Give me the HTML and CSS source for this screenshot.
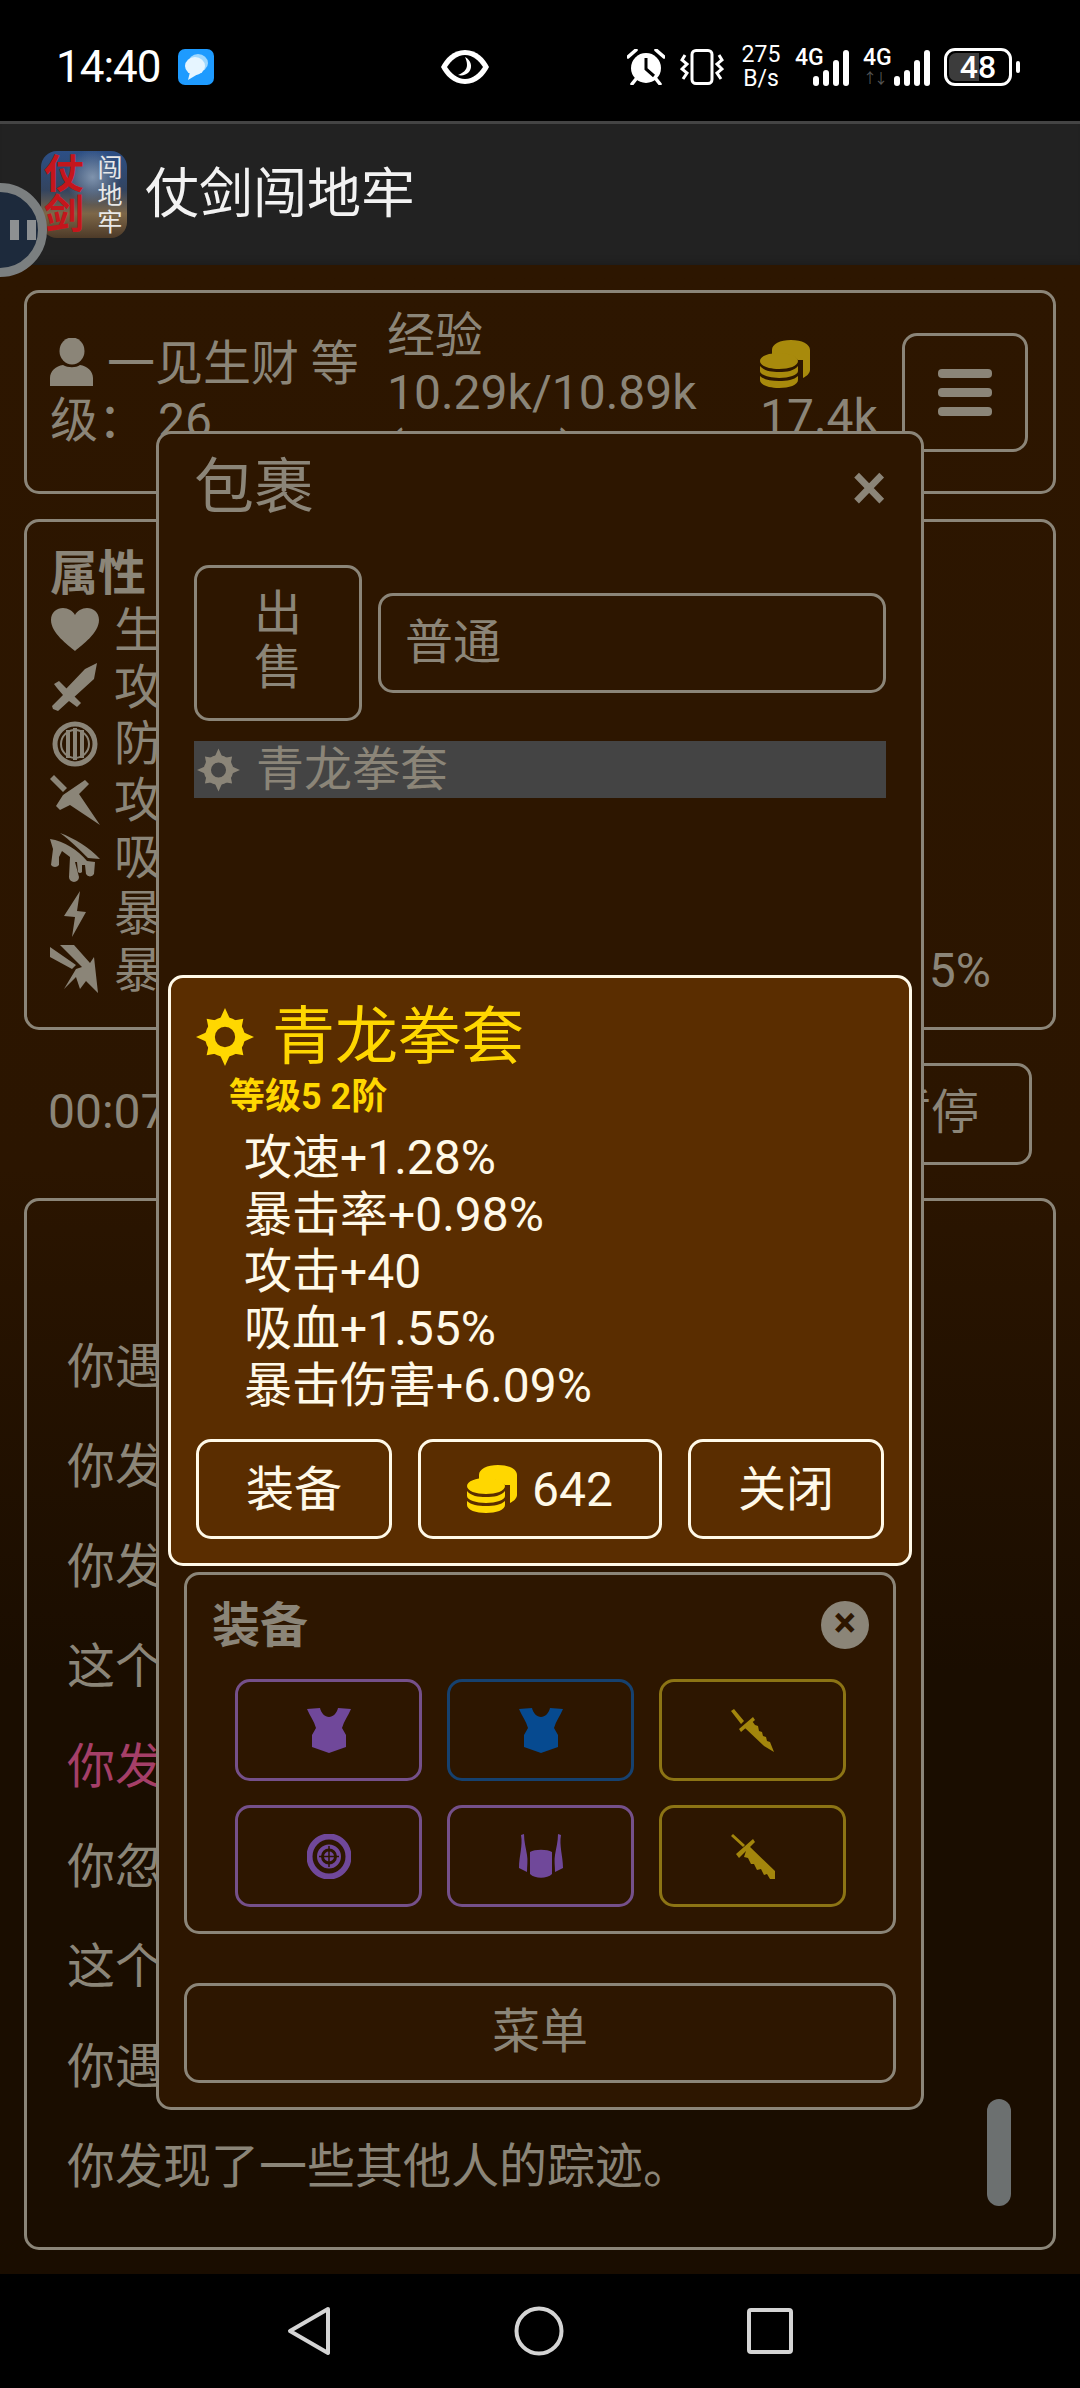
FILE: index.html
```html
<!DOCTYPE html>
<html lang="zh-CN">
<head>
    <meta charset="UTF-8">
    <meta name="viewport" content="width=device-width, initial-scale=1.0">
    <title>仗剑闯地牢</title>
    <link rel="stylesheet" href="styles.css">
</head>
<body>
    <svg class="defs" width="0" height="0">
        <symbol id="coins" viewBox="0 0 50 48">
            <path fill="currentColor" d="M12 10C12 4 20 0 31 0S50 4 50 10V30C50 33 47 36 43 38V20H38C33 14 22 13 12 15Z"/>
            <path fill="currentColor" d="M0 21C0 16 9 13 19 13S38 16 38 21 29 29 19 29 0 26 0 21ZM0 26C4 31 11 32 19 32S34 31 38 26V31C38 35 29 38 19 38S0 35 0 31ZM0 36C4 40 11 41 19 41S34 40 38 36V40C38 45 29 48 19 48S0 45 0 40Z"/>
        </symbol>
        <symbol id="ring" viewBox="0 0 60 60">
            <circle cx="30" cy="30" r="15.500" fill="none" stroke="currentColor" stroke-width="10"/>
            <path fill="currentColor" d="M30 0L35 11H25ZM60 30L49 35V25ZM30 60L25 49H35ZM0 30L11 25V35ZM49 11L47 21 39 13ZM49 49L39 47 47 39ZM11 49L13 39 21 47ZM11 11L21 13 13 21Z"/>
        </symbol>
        <symbol id="tunic" viewBox="0 0 44 45">
            <path fill="currentColor" d="M0 1L13 0C14 5 18 9 22 9S30 5 31 0L44 1C41 8 37 13 35 20L39 27V39L22 45 5 39V27L9 20C7 13 3 8 0 1Z"/>
        </symbol>
    </svg>

    <header class="status-bar">
        <span class="time">14:40</span>
        <svg class="chat-icon" viewBox="0 0 36 36">
            <rect width="36" height="36" rx="7" fill="#1e9bff"/>
            <ellipse cx="20" cy="14" rx="10" ry="9" fill="#9fd8ff"/>
            <ellipse cx="17" cy="17" rx="10" ry="9" fill="#e6f5ff"/>
            <path d="M12 23L10 31 20 25Z" fill="#e6f5ff"/>
        </svg>
        <svg class="eye-icon" viewBox="0 0 48 34">
            <path d="M24 0C36 0 44 9 48 17 44 25 36 34 24 34S4 25 0 17C4 9 12 0 24 0Z" fill="#fff"/>
            <path d="M24 5C32 5 38 11 42 17 38 23 32 29 24 29S10 23 6 17C10 11 16 5 24 5Z" fill="#000"/>
            <path d="M24 7C30 10 32 17 28 22 25 25 21 26 17 25 22 23 26 20 26 15 26 12 25 9 24 7Z" fill="#fff"/>
        </svg>
        <svg class="alarm-icon" viewBox="0 0 38 36">
            <circle cx="19" cy="19" r="15" fill="#fff"/>
            <path d="M19 9V20L27 27" fill="none" stroke="#000" stroke-width="3"/>
            <path d="M1 8L9 1M37 8L29 1M5 35L9 30M33 35L29 30" stroke="#fff" stroke-width="3.500" stroke-linecap="round"/>
        </svg>
        <svg class="vibrate-icon" viewBox="0 0 44 36">
            <rect x="12" y="1.500" width="20" height="33" rx="4" fill="none" stroke="#fff" stroke-width="3"/>
            <path d="M5 6L2 11 7 15 2 20 7 24 3 30M39 6L42 11 37 15 42 20 37 24 41 30" fill="none" stroke="#fff" stroke-width="3"/>
        </svg>
        <span class="net-speed">275<br>B/s</span>
        <span class="signal">
            <span class="signal-label">4G</span>
            <span class="bars"><i class="b1"></i><i class="b2"></i><i class="b3"></i><i class="b4"></i></span>
        </span>
        <span class="signal signal-second">
            <span class="signal-label">4G</span>
            <span class="arrows">↑↓</span>
            <span class="bars"><i class="b1"></i><i class="b2"></i><i class="b3"></i><i class="b4"></i></span>
        </span>
        <span class="battery"><span class="battery-fill"></span><span class="battery-num">48</span></span>
        <span class="battery-tip"></span>
    </header>

    <div class="app-bar">
        <div class="app-icon">
            <span class="app-icon-red">仗剑</span>
            <span class="app-icon-white">闯地牢</span>
        </div>
        <span class="app-title">仗剑闯地牢</span>
    </div>

    <div class="float-ball"><i></i><i></i></div>

    <main class="game">
        <section class="card top-card">
            <div class="player">
                <svg class="person-icon" viewBox="0 0 43 48">
                    <ellipse cx="22" cy="13" rx="12.500" ry="13.500" fill="currentColor"/>
                    <path d="M0 48V40C0 33 6 28 13 27 18 30 26 30 30 27 37 28 43 33 43 40V48Z" fill="currentColor"/>
                </svg>
                一见生财 等级：&nbsp;26
            </div>
            <div class="exp">经验<br>10.29k/10.89k<br>(94.49%)</div>
            <div class="gold">
                <svg class="coin-icon"><use href="#coins"/></svg>
                <span>17.4k</span>
            </div>
            <div class="menu-btn"><i></i><i></i><i></i></div>
        </section>

        <section class="card stats-card">
            <div class="stats-title">属性</div>
            <div class="stat-row">
                <svg class="stat-icon" viewBox="0 0 50 50"><path fill="currentColor" d="M25 46C18 40 1 28 1 15 1 7 7 3 13 3 18 3 23 6 25 10 27 6 32 3 37 3 43 3 49 7 49 15 49 28 32 40 25 46Z"/></svg>
                <span>生命</span>
            </div>
            <div class="stat-row">
                <svg class="stat-icon" viewBox="0 0 50 50"><path fill="currentColor" d="M47 1L44 17 22 37 14 29 35 7ZM4 22L9 19 31 41 27 45 19 39 8 49 3 47 2 44 13 33 7 26Z"/></svg>
                <span>攻击</span>
            </div>
            <div class="stat-row">
                <svg class="stat-icon" viewBox="0 0 50 50"><circle cx="25" cy="25" r="20" fill="none" stroke="currentColor" stroke-width="5"/><circle cx="25" cy="25" r="14" fill="none" stroke="currentColor" stroke-width="2"/><path d="M18 11V39M25 9V41M32 11V39" stroke="currentColor" stroke-width="4"/></svg>
                <span>防御</span>
            </div>
            <div class="stat-row">
                <svg class="stat-icon" viewBox="0 0 50 50"><path fill="currentColor" d="M0 4L4 0 17 13 13 17ZM35 5L39 9 29 19 50 50 20 30 10 35 6 31 13 20Z"/></svg>
                <span>攻速</span>
            </div>
            <div class="stat-row">
                <svg class="stat-icon" viewBox="0 0 50 50"><path fill="currentColor" d="M10 1C24 6 40 16 50 27L38 26C30 18 20 8 10 1ZM0 7C14 9 28 18 37 29L45 30 44 42A4.500 4.500 0 0 1 36 42L35 33H32V40A2.500 2.500 0 0 1 28 40L27 30H25L29 45A5 5 0 0 1 19 45L20 25 12 19 9 25V33A5 5 0 0 1 1 33L3 17Z"/></svg>
                <span>吸血</span>
            </div>
            <div class="stat-row">
                <svg class="stat-icon" viewBox="0 0 50 50"><path fill="currentColor" d="M30 2L27 22 36 23 22 48 25 28 14 27Z"/></svg>
                <span>暴击率</span>
            </div>
            <div class="stat-row">
                <svg class="stat-icon" viewBox="0 0 50 50"><path fill="currentColor" d="M0 12V2L26 20 22 24ZM10 0H24L40 18 44 12 48 48 36 36 30 44 26 32 14 44 26 24 32 22Z"/></svg>
                <span>暴击伤害</span>
                <span class="stat-value">5%</span>
            </div>
        </section>

        <div class="timer-row">
            <span class="timer">00:07</span>
            <div class="pause-btn">暂停</div>
        </div>

        <section class="card log-card">
            <p>你遇到了一只野猪。</p>
            <p>你发现了一个宝箱。</p>
            <p>你发现了一些金币。</p>
            <p>这个房间空无一物。</p>
            <p class="log-rare">你发现了稀有装备！</p>
            <p>你忽然感到一阵寒意。</p>
            <p>这个房间空无一物。</p>
            <p>你遇到了一只骷髅。</p>
            <p>你发现了一些其他人的踪迹。</p>
            <div class="scroll-thumb"></div>
        </section>
    </main>

    <nav class="nav-bar">
        <svg class="nav-back" viewBox="0 0 44 50"><path d="M41 3L3 25 41 47Z" fill="none" stroke="#d4d4d4" stroke-width="4" stroke-linejoin="round"/></svg>
        <svg class="nav-home" viewBox="0 0 50 50"><circle cx="25" cy="25" r="22.500" fill="none" stroke="#d4d4d4" stroke-width="4"/></svg>
        <svg class="nav-recent" viewBox="0 0 46 46"><rect x="2" y="2" width="42" height="42" rx="2" fill="none" stroke="#d4d4d4" stroke-width="4"/></svg>
    </nav>

    <!-- 包裹弹窗 -->
    <div class="bag-modal">
        <div class="bag-head">
            <span class="bag-title">包裹</span>
            <span class="bag-close">×</span>
        </div>
        <div class="bag-tools">
            <div class="sell-btn">出售</div>
            <div class="quality-select">普通</div>
        </div>
        <div class="bag-list">
            <div class="bag-item">
                <svg class="bag-item-icon"><use href="#ring"/></svg>
                青龙拳套
            </div>
        </div>

        <section class="equip-panel">
            <div class="equip-head">
                <span>装备</span>
                <span class="equip-close">×</span>
            </div>
            <div class="equip-grid">
                <div class="slot slot-purple"><svg class="slot-icon"><use href="#tunic"/></svg></div>
                <div class="slot slot-blue"><svg class="slot-icon"><use href="#tunic"/></svg></div>
                <div class="slot slot-gold">
                    <svg class="slot-icon" viewBox="0 0 44 45"><path fill="currentColor" d="M0 3L3 1 13 13 10 16ZM22 9L24 12 10 24 8 21ZM14 20L21 13 24 17 27 18 28 23 31 24 32 28 35 29 36 33 39 34 43 44 33 38Z"/></svg>
                </div>
                <div class="slot slot-purple">
                    <svg class="slot-icon" viewBox="0 0 44 45"><ellipse cx="22" cy="22.500" rx="19.500" ry="20" fill="none" stroke="currentColor" stroke-width="6"/><circle cx="22" cy="22.500" r="10" fill="none" stroke="currentColor" stroke-width="4"/><circle cx="22" cy="22.500" r="5" fill="currentColor"/><path d="M22 12V33M12 22.500H32" stroke="#2d1600" stroke-width="1.500"/></svg>
                </div>
                <div class="slot slot-purple">
                    <svg class="slot-icon" viewBox="0 0 44 45"><path fill="currentColor" d="M2 1L5 0C5 8 7 14 8 21 9 26 8 32 8 38L0 34C0 22 4 12 2 1ZM42 1L39 0C39 8 37 14 36 21 35 26 36 32 36 38L44 34C44 22 40 12 42 1ZM11 18C16 15 28 15 33 18V40C28 45 16 45 11 40Z"/></svg>
                </div>
                <div class="slot slot-gold">
                    <svg class="slot-icon" viewBox="0 0 44 45"><path fill="currentColor" d="M0 2L2 0 14 11 12 13ZM22 5L24 8 8 24 5 20ZM17 11L44 37V45L39 45 36 40 33 41 30 35 26 36 23 30 20 30 17 24 13 23Z"/></svg>
                </div>
            </div>
        </section>

        <div class="bag-menu-btn">菜单</div>

        <!-- 物品详情 -->
        <section class="item-popup">
            <div class="item-name">
                <svg class="item-name-icon"><use href="#ring"/></svg>
                青龙拳套
            </div>
            <div class="item-level">等级5 2阶</div>
            <ul class="item-attrs">
                <li>攻速+1.28%</li>
                <li>暴击率+0.98%</li>
                <li>攻击+40</li>
                <li>吸血+1.55%</li>
                <li>暴击伤害+6.09%</li>
            </ul>
            <div class="item-actions">
                <div class="item-btn item-btn-side">装备</div>
                <div class="item-btn item-btn-sell">
                    <svg class="item-coin"><use href="#coins"/></svg>
                    642
                </div>
                <div class="item-btn item-btn-side">关闭</div>
            </div>
        </section>
    </div>
</body>
</html>
```

FILE: styles.css
```css
* {
    box-sizing: border-box;
}

body {
    position: relative;
    display: flex;
    flex-direction: column;
    width: 1080px;
    height: 2388px;
    margin: 0;
    overflow: hidden;
    background: #000;
    color: #8b8578;
    font-family: Roboto, "Noto Sans CJK SC", sans-serif;
    font-size: 48px;
    line-height: 57px;
}

.defs {
    position: absolute;
}

/* 状态栏 */
.status-bar {
    display: flex;
    flex: none;
    align-items: center;
    height: 121px;
    padding: 13px 0 0 56px;
    color: #fff;
}

.time {
    width: 109px;
    font-size: 44px;
    letter-spacing: -1px;
    line-height: 50px;
}

.chat-icon {
    width: 36px;
    height: 36px;
    margin-left: 13px;
}

.eye-icon {
    width: 48px;
    height: 34px;
    margin-left: 227px;
}

.alarm-icon {
    width: 38px;
    height: 36px;
    margin-left: 138px;
}

.vibrate-icon {
    width: 44px;
    height: 36px;
    margin-left: 15px;
}

.net-speed {
    width: 42px;
    margin-left: 16px;
    font-size: 23px;
    line-height: 24px;
    text-align: center;
}

.signal {
    position: relative;
    display: block;
    width: 54px;
    height: 38px;
    margin-left: 13px;
}

.signal-second {
    width: 67px;
    margin-left: 14px;
}

.signal-label {
    position: absolute;
    top: -3px;
    left: 0;
    font-size: 23px;
    font-weight: 500;
    line-height: 26px;
}

.arrows {
    position: absolute;
    bottom: 0;
    left: 0;
    color: #555;
    font-size: 14px;
    letter-spacing: -3px;
    line-height: 16px;
}

.bars {
    position: absolute;
    right: 0;
    bottom: 0;
    display: flex;
    align-items: flex-end;
    gap: 4px;
}

.bars i {
    width: 6px;
    border-radius: 3px;
    background: #fff;
}

.b1 { height: 10px; }
.b2 { height: 16px; }
.b3 { height: 26px; }
.b4 { height: 36px; }

.battery {
    position: relative;
    width: 68px;
    height: 38px;
    margin-left: 14px;
    overflow: hidden;
    border: 3px solid #fff;
    border-radius: 11px;
}

.battery-fill {
    position: absolute;
    top: 0;
    bottom: 0;
    left: 0;
    width: 48%;
    margin: 2px;
    border-radius: 7px 0 0 7px;
    background: #3c3c3c;
}

.battery-num {
    position: absolute;
    inset: 0;
    font-size: 32px;
    font-weight: 500;
    line-height: 32px;
    text-align: center;
}

.battery-tip {
    width: 4px;
    height: 12px;
    margin-left: 4px;
    border-radius: 2px;
    background: #fff;
}

/* 标题栏 */
.app-bar {
    display: flex;
    flex: none;
    align-items: center;
    gap: 18px;
    height: 144px;
    padding: 0 0 0 41px;
    border-top: 3px solid #444;
    background: #222;
    box-shadow: inset 0 -8px 6px -6px #1c1c1c;
    color: #f2f2f2;
}

.app-icon {
    display: flex;
    justify-content: space-between;
    width: 86px;
    height: 87px;
    padding: 4px 4px 0 3px;
    overflow: hidden;
    border-radius: 16px;
    background: radial-gradient(circle at 60% 30%, #7f93ad, transparent 35%), linear-gradient(#2c4f86, #33445f 45%, #7d6748 72%, #4d3a28);
    font-weight: 700;
}

.app-icon-red {
    width: 40px;
    color: #c4161c;
    font-size: 40px;
    line-height: 40px;
    text-align: center;
}

.app-icon-white {
    width: 26px;
    color: #e8e8e8;
    font-size: 25px;
    font-weight: 400;
    line-height: 27px;
    text-align: center;
}

.app-title {
    font-size: 54px;
    line-height: 62px;
}

/* 悬浮球 */
.float-ball {
    position: absolute;
    top: 183px;
    left: -47px;
    display: flex;
    align-items: center;
    justify-content: flex-end;
    gap: 8px;
    width: 94px;
    height: 94px;
    padding-right: 2px;
    border: 9px solid #7b7f80;
    border-radius: 50%;
    background: #1d2a3c;
}

.float-ball i {
    width: 9px;
    height: 20px;
    background: #8d9092;
}

/* 主体 */
.game {
    display: flex;
    flex: 1;
    flex-direction: column;
    gap: 25px;
    padding: 25px 24px 24px;
    background: linear-gradient(#2d1600, #2b1500 45%, #1a0d00 70%, #1a0d00);
}

.card {
    border: 3px solid #8b8578;
    border-radius: 15px;
}

.top-card {
    display: flex;
    flex: none;
    align-items: center;
    height: 204px;
    padding-left: 23px;
}

.player {
    width: 337px;
    padding-right: 20px;
}

.person-icon {
    width: 43px;
    height: 48px;
    margin-right: 2px;
    vertical-align: -6px;
}

.exp {
    width: 373px;
    white-space: nowrap;
}

.gold {
    display: flex;
    flex-direction: column;
    width: 142px;
}

.coin-icon {
    width: 50px;
    height: 48px;
    color: #a88a0c;
}

.menu-btn {
    display: flex;
    flex-direction: column;
    justify-content: center;
    align-items: center;
    gap: 10px;
    width: 126px;
    height: 119px;
    border: 3px solid #8b8578;
    border-radius: 15px;
}

.menu-btn i {
    width: 54px;
    height: 9px;
    border-radius: 4px;
    background: #8b8578;
}

.stats-card {
    flex: none;
    height: 511px;
    padding: 23px 62px 0 23px;
}

.stats-title {
    font-weight: 700;
}

.stat-row {
    display: flex;
    align-items: center;
    justify-content: flex-start;
    height: 56.700px;
}

.stat-icon {
    flex: none;
    width: 50px;
    height: 50px;
    margin-right: 14px;
}

.stat-value {
    margin-left: auto;
}

.timer-row {
    display: flex;
    flex: none;
    align-items: center;
    justify-content: space-between;
    height: 102px;
    margin-top: 8px;
    margin-bottom: 8px;
    padding-left: 24px;
}

.timer {
    padding-bottom: 6px;
}

.pause-btn {
    display: flex;
    align-items: center;
    justify-content: center;
    width: 202px;
    height: 102px;
    margin-right: 24px;
    padding-bottom: 4px;
    border: 3px solid #8b8578;
    border-radius: 15px;
}

.log-card {
    position: relative;
    display: flex;
    flex: 1;
    flex-direction: column;
    justify-content: flex-end;
    padding: 0 40px 52px;
}

.log-card p {
    margin: 43px 0 0;
}

.log-card .log-rare {
    color: #a53f68;
}

.scroll-thumb {
    position: absolute;
    right: 42px;
    bottom: 41px;
    width: 24px;
    height: 107px;
    border-radius: 12px;
    background: #6c7070;
}

/* 导航栏 */
.nav-bar {
    display: flex;
    flex: none;
    align-items: center;
    justify-content: center;
    gap: 183px;
    height: 114px;
}

.nav-back {
    width: 44px;
    height: 50px;
}

.nav-home {
    width: 50px;
    height: 50px;
}

.nav-recent {
    width: 46px;
    height: 46px;
}

/* 包裹弹窗 */
.bag-modal {
    position: absolute;
    top: 431px;
    left: 156px;
    display: flex;
    flex-direction: column;
    width: 768px;
    height: 1679px;
    padding: 0 24px 24px 35px;
    border: 3px solid #8b8578;
    border-radius: 15px;
    background: #2d1600;
}

.bag-head {
    display: flex;
    align-items: center;
    justify-content: space-between;
    height: 106px;
    padding-right: 10px;
}

.bag-title {
    font-size: 60px;
}

.bag-close {
    font-size: 66px;
    font-weight: 500;
}

.bag-tools {
    display: flex;
    align-items: center;
    gap: 16px;
    margin-top: 25px;
    padding-right: 11px;
}

.sell-btn {
    width: 168px;
    height: 156px;
    padding: 19px 50px;
    border: 3px solid #8b8578;
    border-radius: 15px;
    line-height: 54px;
    text-align: center;
}

.quality-select {
    flex: 1;
    height: 100px;
    padding: 18px 24px;
    border: 3px solid #8b8578;
    border-radius: 15px;
}

.bag-list {
    flex: 1;
    padding: 20px 11px 0 0;
}

.bag-item {
    display: flex;
    align-items: center;
    gap: 16px;
    height: 57px;
    padding-left: 3px;
    background: #444;
}

.bag-item-icon {
    width: 43px;
    height: 46px;
}

.equip-panel {
    height: 362px;
    margin: 0 1px 0 -10px;
    padding: 0 24px 0 25px;
    border: 3px solid #8b8578;
    border-radius: 15px;
}

.equip-head {
    display: flex;
    align-items: center;
    justify-content: space-between;
    height: 100px;
    font-weight: 700;
}

.equip-close {
    width: 48px;
    height: 48px;
    border-radius: 50%;
    background: #8b8578;
    color: #2d1600;
    font-size: 42px;
    line-height: 44px;
    text-align: center;
}

.equip-grid {
    display: grid;
    grid-template-columns: repeat(3, 187px);
    gap: 24px 25px;
    justify-content: center;
    margin-top: 4px;
}

.slot {
    display: flex;
    align-items: center;
    justify-content: center;
    height: 102px;
    border: 3px solid;
    border-radius: 15px;
}

.slot-purple {
    border-color: #75508a;
    color: #70489a;
}

.slot-blue {
    border-color: #16416f;
    color: #064a90;
}

.slot-gold {
    border-color: #8c7414;
    color: #a3860c;
}

.slot-icon {
    width: 44px;
    height: 45px;
}

.bag-menu-btn {
    height: 100px;
    margin: 49px 1px 0 -10px;
    border: 3px solid #8b8578;
    border-radius: 15px;
    line-height: 92px;
    text-align: center;
}

/* 物品详情 */
.item-popup {
    position: absolute;
    top: 541px;
    left: 9px;
    width: 744px;
    height: 591px;
    padding: 23px 25px 0;
    border: 3px solid #fff9e8;
    border-radius: 15px;
    background: #5a2d00;
    color: #fff9e8;
}

.item-name {
    display: flex;
    align-items: center;
    gap: 18px;
    color: #ffd700;
    font-size: 63px;
    line-height: 72px;
}

.item-name-icon {
    width: 58px;
    height: 60px;
}

.item-level {
    margin-top: 1px;
    padding-left: 33px;
    color: #ffd700;
    font-size: 36px;
    font-weight: 700;
    line-height: 46px;
}

.item-attrs {
    margin: 9px 0 0;
    padding: 0 0 0 48px;
    list-style: none;
}

.item-actions {
    display: flex;
    justify-content: space-between;
    margin-top: 25px;
}

.item-btn {
    display: flex;
    align-items: center;
    justify-content: center;
    height: 100px;
    border: 3px solid #fff9e8;
    border-radius: 15px;
}

.item-btn-side {
    width: 196px;
}

.item-btn-sell {
    gap: 15px;
    width: 244px;
}

.item-coin {
    width: 50px;
    height: 48px;
    color: #ffd700;
}
```
